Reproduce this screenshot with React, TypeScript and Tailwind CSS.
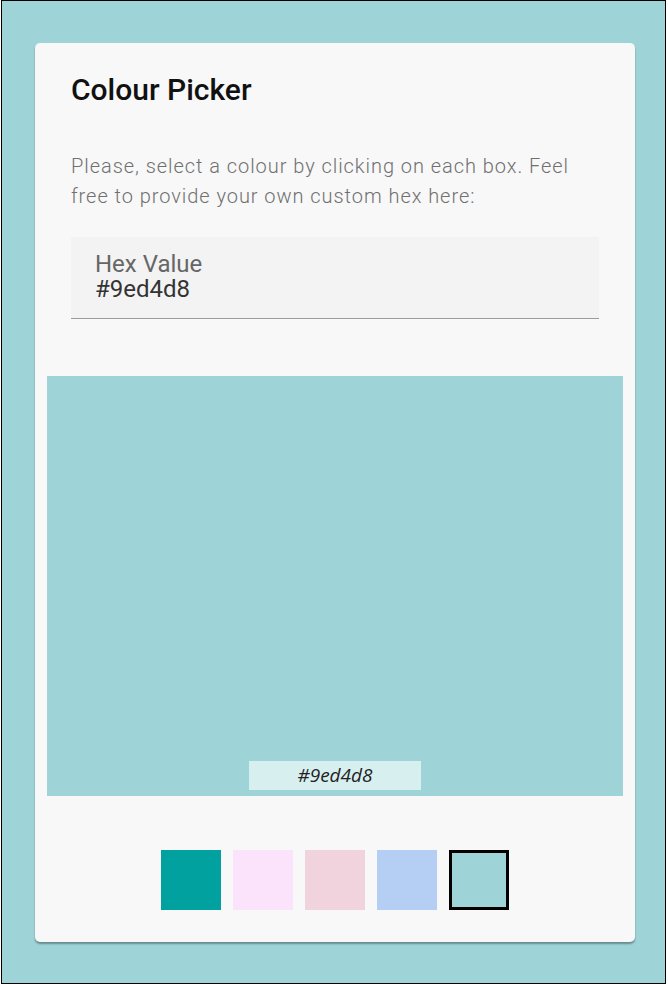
import React, { useState } from 'react';

const swatches = ['#00a19f', '#fbe3fc', '#f0d3dc', '#b5cef3', '#9ed4d8'];

const App: React.FC = () => {
  const [hex, setHex] = useState('#9ed4d8');

  return (
    <div className="bg-white w-[668px] h-[984px]">
      <div className="ml-[1px] w-[665px] h-[984px] border border-black bg-[#9ed4d8] pt-[42px] pl-[33px]">
        <div
          className="w-[600px] h-[899px] bg-[#f8f8f8] rounded-[5px] shadow-[0_2px_2px_rgba(0,0,0,0.35)] pt-[28px] flex flex-col"
          style={{ fontFamily: 'Roboto, "Noto Sans", sans-serif' }}
        >
          <h1 className="px-[36px] text-[30px] font-medium text-[#111] leading-[38px]">Colour Picker</h1>
          <p className="px-[36px] mt-[42px] text-[20px] font-light leading-[30px] text-[#707070] tracking-[0.95px]">
            Please, select a colour by clicking on each box. Feel free to provide your own custom hex here:
          </p>
          <div className="mx-[36px] mt-[26px] h-[82px] bg-[#f3f3f3] border-b border-[#9a9a9a] px-[24px] pt-[15px]">
            <div className="text-[24px] leading-[25px] text-[#666]">Hex Value</div>
            <input
              value={hex}
              onChange={(e) => setHex(e.target.value)}
              className="block w-full bg-transparent outline-none text-[24px] leading-[25px] text-[#333]"
            />
          </div>
          <div className="mx-[12px] mt-[57px] h-[420px] flex flex-col justify-end items-center pb-[6px]" style={{ backgroundColor: hex }}>
            <div className="w-[172px] h-[29px] bg-[#d8eff0] flex items-center justify-center italic text-[19px] text-[#222]" style={{ fontFamily: '"Open Sans", "Liberation Sans", sans-serif' }}>
              {hex}
            </div>
          </div>
          <div className="mt-[54px] flex justify-center gap-[12px]">
            {swatches.map((c) => (
              <button
                key={c}
                onClick={() => setHex(c)}
                className={`w-[60px] h-[60px] ${c === hex ? 'border-[3px] border-black' : ''}`}
                style={{ backgroundColor: c }}
              />
            ))}
          </div>
        </div>
      </div>
    </div>
  );
};

export default App;
